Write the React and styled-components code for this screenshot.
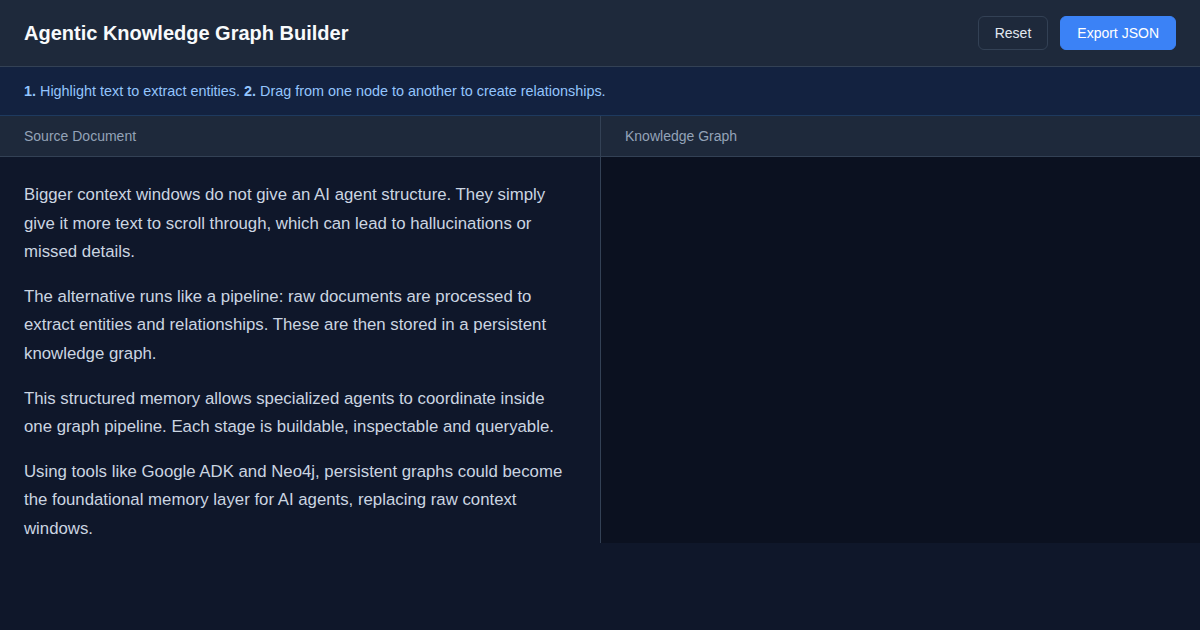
import React from 'react';
import styled, { createGlobalStyle } from 'styled-components';

const GlobalStyle = createGlobalStyle`
  body {
    margin: 0;
    background: #0f172a;
    font-family: "Liberation Sans", Arial, sans-serif;
  }
  * { box-sizing: border-box; }
`

const Page = styled.div`
  min-height: 630px;
  background: #0f172a;
  color: #e2e8f0;
`

const Header = styled.header`
  height: 67px;
  display: flex;
  align-items: center;
  justify-content: space-between;
  padding: 0 24px;
  background: #1e293b;
  border-bottom: 1px solid #334155;
`

const Title = styled.h1`
  margin: 0;
  font-size: 20px;
  font-weight: 700;
  color: #f8fafc;
`

const Actions = styled.div`
  display: flex;
  gap: 12px;
`

const Button = styled.button`
  height: 34px;
  padding: 0 16px;
  border-radius: 6px;
  font-family: inherit;
  font-size: 14px;
  cursor: pointer;
  color: ${p => (p.$primary ? '#ffffff' : '#e2e8f0')};
  background: ${p => (p.$primary ? '#3b82f6' : 'transparent')};
  border: 1px solid ${p => (p.$primary ? '#3b82f6' : '#334155')};
`

const Banner = styled.div`
  height: 49px;
  display: flex;
  align-items: center;
  padding: 0 24px;
  background: #132240;
  border-bottom: 1px solid #1e3a5f;
  color: #93c5fd;
  font-size: 14.4px;

  b { font-weight: 700; }
`

const Workspace = styled.main`
  display: grid;
  grid-template-columns: 600px 1fr;
  height: 427px;
`

const Panel = styled.section`
  display: flex;
  flex-direction: column;
  min-height: 0;
  background: ${p => (p.$dark ? '#0b1120' : '#0f172a')};
  border-left: ${p => (p.$dark ? '1px solid #334155' : 'none')};
`

const PanelHeader = styled.div`
  height: 41px;
  flex-shrink: 0;
  display: flex;
  align-items: center;
  padding: 0 24px;
  background: #1e293b;
  border-bottom: 1px solid #334155;
  color: #94a3b8;
  font-size: 14px;
`

const Document = styled.div`
  flex: 1;
  padding: 24px 24px 0;
  overflow: hidden;

  p {
    margin: 0 0 16px;
    font-size: 16.8px;
    line-height: 28.6px;
    color: #cbd5e1;
  }
`

const paragraphs = [
  'Bigger context windows do not give an AI agent structure. They simply give it more text to scroll through, which can lead to hallucinations or missed details.',
  'The alternative runs like a pipeline: raw documents are processed to extract entities and relationships. These are then stored in a persistent knowledge graph.',
  'This structured memory allows specialized agents to coordinate inside one graph pipeline. Each stage is buildable, inspectable and queryable.',
  'Using tools like Google ADK and Neo4j, persistent graphs could become the foundational memory layer for AI agents, replacing raw context windows.',
]

export default function App() {
  return (
    <Page>
      <GlobalStyle />
      <Header>
        <Title>Agentic Knowledge Graph Builder</Title>
        <Actions>
          <Button>Reset</Button>
          <Button $primary>Export JSON</Button>
        </Actions>
      </Header>
      <Banner>
        <span>
          <b>1.</b> Highlight text to extract entities. <b>2.</b> Drag from one node to another to create relationships.
        </span>
      </Banner>
      <Workspace>
        <Panel>
          <PanelHeader>Source Document</PanelHeader>
          <Document>
            {paragraphs.map((text, i) => (
              <p key={i}>{text}</p>
            ))}
          </Document>
        </Panel>
        <Panel $dark>
          <PanelHeader>Knowledge Graph</PanelHeader>
        </Panel>
      </Workspace>
    </Page>
  )
}
